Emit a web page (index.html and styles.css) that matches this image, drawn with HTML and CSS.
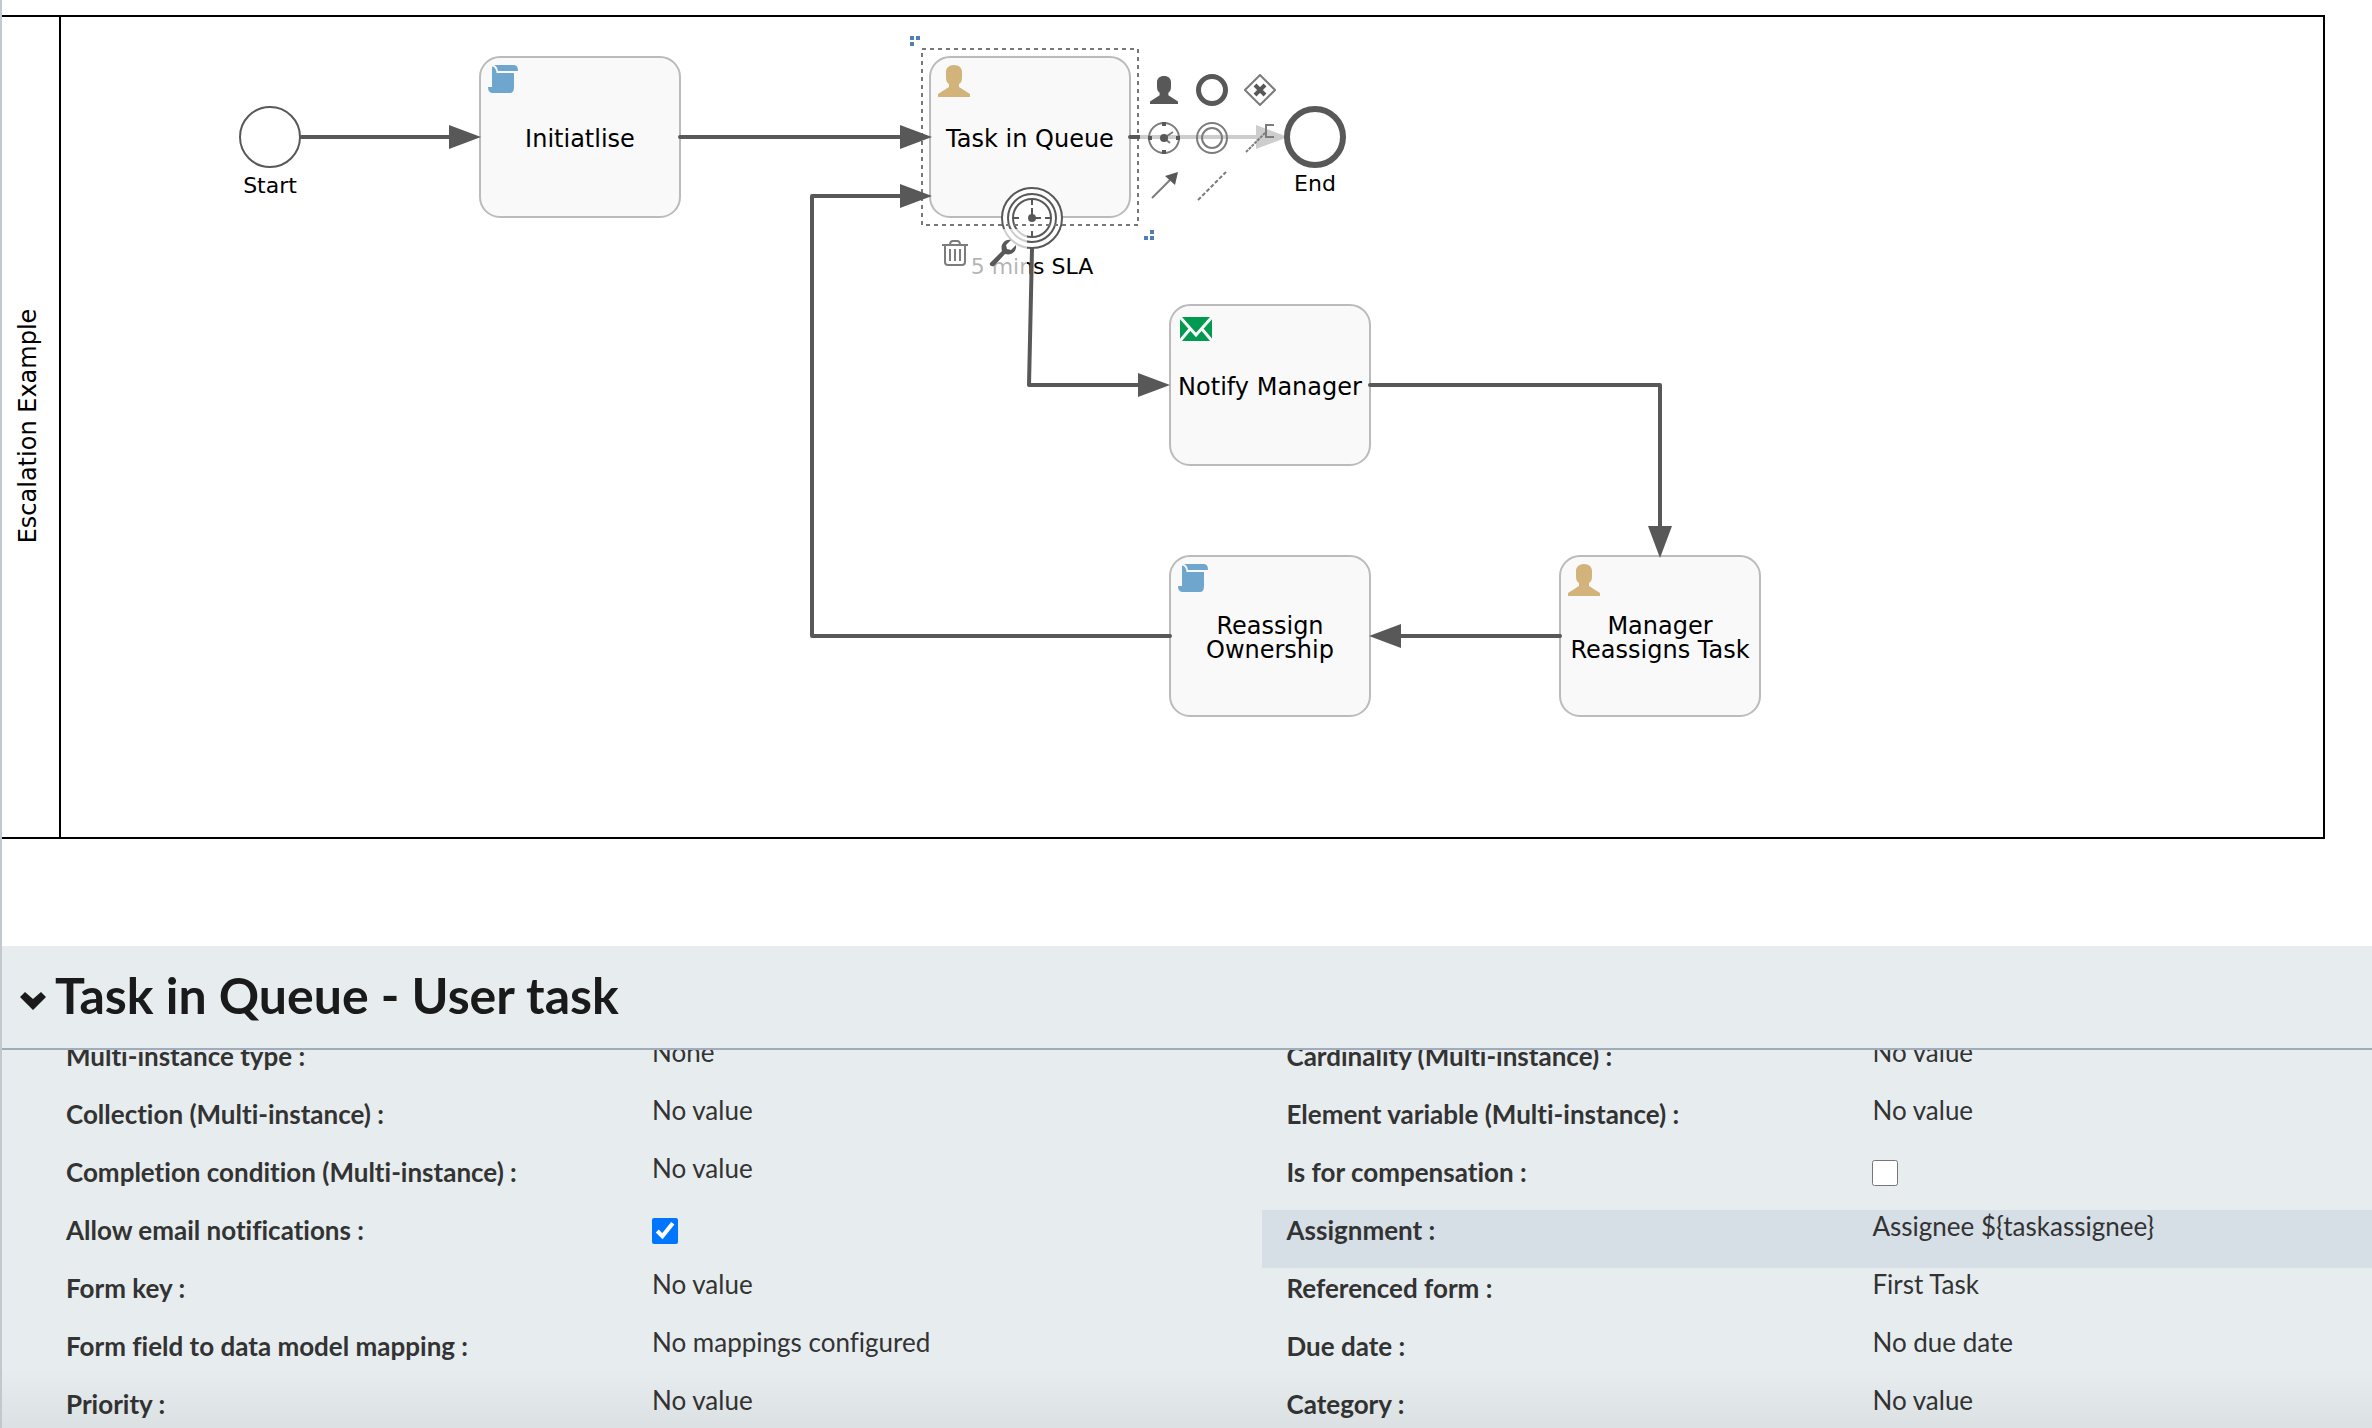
FILE: index.html
```html
<!DOCTYPE html>
<html lang="en">
<head>
<meta charset="utf-8">
<title>Escalation Example</title>
<link rel="stylesheet" href="styles.css">
</head>
<body>
<main class="editor">
  <section class="canvas" aria-label="Process diagram">
    <svg class="diagram" width="2326" height="944" viewBox="0 0 2326 944">
      <defs>
        <symbol id="user" viewBox="0 0 32 32"><path d="M16 0C21 0 24 3 24 7V12C24 16 23 18 21 19V22L32 29V32H0V29L11 22V19C9 18 8 16 8 12V7C8 3 11 0 16 0Z"/></symbol>
        <symbol id="script" viewBox="0 0 30 28"><path d="M6 0H26Q30 0 30 6H10Q9 1 6 0ZM4 1.500Q8 2 8.500 8H26V22Q26 28 22 28H5Q0 28 0 22H4Z"/></symbol>
      </defs>
      <g class="pool">
        <path d="M0 16H2324V838H0M60 16V838"/>
      </g>
      <text class="label" transform="translate(36 426) rotate(-90)">Escalation Example</text>

      <circle class="event" cx="270" cy="137" r="30"/>
      <circle class="event end" cx="1315" cy="137" r="28"/>
      <g class="task">
        <rect x="480" y="57" width="200" height="160" rx="20"/>
        <rect x="930" y="57" width="200" height="160" rx="20"/>
        <rect x="1170" y="305" width="200" height="160" rx="20"/>
        <rect x="1170" y="556" width="200" height="160" rx="20"/>
        <rect x="1560" y="556" width="200" height="160" rx="20"/>
      </g>
      <use class="blue" href="#script" x="488" y="65" width="30" height="28"/>
      <use class="tan" href="#user" x="938" y="65" width="32" height="32"/>
      <use class="blue" href="#script" x="1178" y="564" width="30" height="28"/>
      <use class="tan" href="#user" x="1568" y="564" width="32" height="32"/>
      <g class="mail">
        <rect x="1180" y="317" width="32" height="24"/>
        <path d="M1180 317L1196 335L1212 317M1180 341L1190 329M1212 341L1202 329"/>
      </g>

      <text class="label" x="580" y="147">Initiatlise</text>
      <text class="label" x="1030" y="147">Task in Queue</text>
      <text class="label" x="1270" y="395">Notify Manager</text>
      <text class="label" x="1270" y="634">Reassign<tspan x="1270" dy="24">Ownership</tspan></text>
      <text class="label" x="1660" y="634">Manager<tspan x="1660" dy="24">Reassigns Task</tspan></text>
      <text class="label small" x="270" y="193">Start</text>
      <text class="label small" x="1315" y="191">End</text>
      <text class="label small" x="1032" y="274">5 mins SLA</text>

      <g class="event">
        <circle cx="1032" cy="218" r="30"/>
        <circle cx="1032" cy="218" r="24"/>
        <circle cx="1032" cy="218" r="19"/>
        <path d="M1032 199V205M1032 208V218M1032 231V237M1013 218H1019M1035 218H1041M1045 218H1051"/>
        <circle class="hub" cx="1032" cy="218" r="3"/>
      </g>
      <path class="selection" d="M922 49H1138V225H922Z"/>

      <g class="flow">
        <path d="M301 137H455M680 137H905M1170 636H812V196H905M1032 249L1029 385H1145M1370 385H1660V530M1560 636H1396M1130 137H1260"/>
      </g>
      <path class="head" d="M449 125L481 137L449 149ZM900 125L932 137L900 149ZM900 184L932 196L900 208ZM1138 373L1170 385L1138 397ZM1648 526L1660 558L1672 526ZM1401 624L1369 636L1401 648ZM1256 125L1288 137L1256 149Z"/>
      <path class="handle" d="M910 36h4v4h-4zM916 36h4v4h-4zM910 42h4v4h-4zM1150 230h4v4h-4zM1144 236h4v4h-4zM1150 236h4v4h-4z"/>
    </svg>

    <div class="pad pad-append">
      <button class="tool" aria-label="Append user task"><svg width="28" height="28" viewBox="0 0 32 32"><use href="#user"/></svg></button>
      <button class="tool" aria-label="Append end event"><svg width="32" height="32"><circle class="line" cx="16" cy="16" r="13.500" stroke-width="5"/></svg></button>
      <button class="tool" aria-label="Append gateway"><svg width="32" height="32"><path class="line light" stroke-width="2" d="M16 1L31 16L16 31L1 16Z"/><path class="line" stroke-width="4" d="M11 11L21 21M21 11L11 21"/></svg></button>
      <button class="tool" aria-label="Append timer event"><svg width="32" height="32"><circle class="line light" cx="16" cy="16" r="15" stroke-width="2"/><path class="line" stroke-width="4" d="M16 0V4M16 28V32M0 16H4M28 16H32"/><path class="line light" stroke-width="2" d="M25 10L16 16L22 21"/><circle cx="16" cy="16" r="4"/></svg></button>
      <button class="tool" aria-label="Append intermediate event"><svg width="32" height="32"><circle class="line light" cx="16" cy="16" r="15" stroke-width="2"/><circle class="line light" cx="16" cy="16" r="10" stroke-width="2"/></svg></button>
      <button class="tool" aria-label="Append text annotation"><svg width="32" height="32"><path class="line light" stroke-width="2" d="M30 3H22V15H30"/><path class="line light" stroke-width="2" stroke-dasharray="3 1" d="M2 30L22 10"/></svg></button>
      <button class="tool" aria-label="Connect with sequence flow"><svg width="32" height="32"><path class="line light" stroke-width="2" d="M4 28L22 10"/><path d="M30 2L27 15L17 6Z"/></svg></button>
      <button class="tool" aria-label="Connect with association"><svg width="32" height="32"><path class="line light" stroke-width="2" stroke-dasharray="4 2" d="M2 30L30 2"/></svg></button>
    </div>
    <div class="pad pad-edit">
      <button class="tool" aria-label="Delete"><svg width="28" height="28"><path class="line light" stroke-width="2" d="M1 6H27M9 6Q9 2 12 2H16Q19 2 19 6M4 6V23Q4 26 7 26H21Q24 26 24 23V6M9 10V22M14 10V22M19 10V22"/></svg></button>
      <button class="tool" aria-label="Change type"><svg width="28" height="28"><path d="M1 24L13 12C11 5 16 0 22 1L17 6L18 10L22 11L27 6C28 12 23 17 16 15L5 27C2 28 0 26 1 24Z"/></svg></button>
    </div>
  </section>

  <section class="panel">
    <header class="panel-head">
      <button class="toggle" aria-label="Collapse properties" aria-expanded="true"><svg width="28" height="20"><path d="M1 6L6 1L14 8L22 1L27 6L14 19Z"/></svg></button>
      <h1 class="title">Task in Queue - User task</h1>
    </header>
    <div class="panel-body">
      <dl class="fields">
        <div class="field"><dt>Multi-instance type :</dt><dd>None</dd></div>
        <div class="field"><dt>Cardinality (Multi-instance) :</dt><dd>No value</dd></div>
        <div class="field"><dt>Collection (Multi-instance) :</dt><dd>No value</dd></div>
        <div class="field"><dt>Element variable (Multi-instance) :</dt><dd>No value</dd></div>
        <div class="field"><dt>Completion condition (Multi-instance) :</dt><dd>No value</dd></div>
        <div class="field"><dt><label for="comp">Is for compensation :</label></dt><dd><input class="check" type="checkbox" id="comp"></dd></div>
        <div class="field"><dt><label for="mail">Allow email notifications :</label></dt><dd><input class="check" type="checkbox" id="mail" checked></dd></div>
        <div class="field active"><dt>Assignment :</dt><dd>Assignee ${taskassignee}</dd></div>
        <div class="field"><dt>Form key :</dt><dd>No value</dd></div>
        <div class="field"><dt>Referenced form :</dt><dd>First Task</dd></div>
        <div class="field"><dt>Form field to data model mapping :</dt><dd>No mappings configured</dd></div>
        <div class="field"><dt>Due date :</dt><dd>No due date</dd></div>
        <div class="field"><dt>Priority :</dt><dd>No value</dd></div>
        <div class="field"><dt>Category :</dt><dd>No value</dd></div>
      </dl>
    </div>
  </section>
</main>
</body>
</html>
```
FILE: styles.css
```css
* { box-sizing: border-box; }
body { margin: 0; background: #fff; font-family: Lato, sans-serif; font-variant-ligatures: none; }
button { padding: 0; border: 0; background: none; cursor: pointer; }

.editor { display: flex; flex-direction: column; height: 100vh; border-left: 2px solid #c3c8cf; overflow: hidden; }

/* Diagram */
.canvas { position: relative; flex: none; overflow: hidden; margin-left: -2px; clip-path: inset(0 0 0 2px); padding-bottom: 2px; }
.diagram { display: block; }
.pool { fill: none; stroke: #000; stroke-width: 2; }
.label { font: 24px/24px Verdana, "DejaVu Sans", sans-serif; text-anchor: middle; fill: #000; }
.label.small { font-size: 22px; }
.event { fill: #fff; stroke: #585858; stroke-width: 2; }
.event.end { stroke-width: 6; }
.hub { fill: #585858; }
.task { fill: #f9f9f9; stroke: #bbb; stroke-width: 2; }
.blue { fill: #6fa6ce; }
.tan { fill: #d2b47a; }
.mail rect { fill: #019a50; }
.mail path { fill: none; stroke: #f9f9f9; stroke-width: 3; }
.flow { fill: none; stroke: #585858; stroke-width: 4; stroke-linejoin: round; stroke-linecap: round; }
.head { fill: #585858; }
.selection { fill: none; stroke: #777; stroke-width: 2; stroke-dasharray: 4 4; }
.handle { fill: #4f7fb8; }

.pad { position: absolute; display: grid; grid-auto-rows: 48px; }
.pad-append { left: 1140px; top: 66px; grid-template-columns: repeat(3, 48px); }
.pad-edit { left: 931px; top: 229px; grid-template-columns: repeat(2, 48px); }
.tool { display: flex; align-items: center; justify-content: center; background: rgba(255, 255, 255, 0.7); }
.tool svg { fill: #585858; }
.tool .line { fill: none; stroke: #585858; }
.tool .light { stroke: #7c7c7c; }

/* Properties */
.panel { position: relative; flex: 1; min-height: 0; display: flex; flex-direction: column; background: #e7edef; }
.panel::after { content: ""; position: absolute; inset: auto 0 0 0; height: 60px; background: linear-gradient(rgba(0, 0, 0, 0), rgba(0, 0, 0, 0.05)); pointer-events: none; }
.panel-head { display: flex; align-items: center; gap: 8px; flex: none; height: 104px; padding: 0 17px 4px; border-bottom: 2px solid #a0acbb; }
.toggle { display: flex; padding-top: 12px; }
.toggle svg { fill: #1a1a1a; }
.title { margin: 0; font-size: 50px; line-height: 64px; font-weight: 700; color: #1a1a1a; }
.panel-body { flex: 1; min-height: 0; overflow: hidden; padding-left: 40px; }
.fields { display: grid; grid-template-columns: 11fr 10fr; grid-auto-rows: 58px; margin: -14px 0 0; font-size: 26px; line-height: 32px; color: #333; }
.field { display: grid; grid-template-columns: 586px 1fr; padding: 0 24px; }
.field dt { padding-top: 4px; font-weight: 700; }
.field dd { margin: 0; }
.active { background: #d6dee6; }
.check { display: block; width: 26px; height: 26px; margin: 8px 0 0; }
```
